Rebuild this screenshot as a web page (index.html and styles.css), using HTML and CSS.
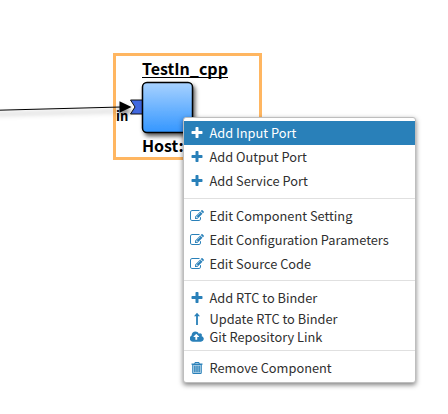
FILE: index.html
```
<!DOCTYPE html>
<html lang="en">
<head>
<meta charset="utf-8">
<title>System editor</title>
<link rel="stylesheet" href="styles.css">
</head>
<body>
<svg class="diagram" width="448" height="414" viewBox="0 0 448 414">
  <defs>
    <linearGradient id="body" x1="0" y1="0" x2="0" y2="1"><stop offset="0" stop-color="#a8d2ff"/><stop offset="1" stop-color="#3396ff"/></linearGradient>
    <filter id="shadow" filterUnits="userSpaceOnUse" x="-20" y="50" width="300" height="130"><feDropShadow dx="2" dy="3" stdDeviation="2.2" flood-color="#000" flood-opacity=".65"/></filter>
    <filter id="soft" filterUnits="userSpaceOnUse" x="-20" y="80" width="180" height="50"><feDropShadow dx="1" dy="4" stdDeviation="2.5" flood-color="#000" flood-opacity=".5"/></filter>
  </defs>
  <rect class="selection" x="114.5" y="54.5" width="146" height="104"/>
  <text class="title" x="142" y="75" textLength="86" lengthAdjust="spacingAndGlyphs">TestIn_cpp</text>
  <path class="underline" d="M142 77.5h86"/>
  <text class="host" x="142" y="152">Host:</text>
  <path class="port" d="M130.500 100h14v14h-14l4.500-7z"/>
  <rect class="component" x="142.500" y="82.500" width="50" height="50" rx="4.500" filter="url(#shadow)"/>
  <g filter="url(#soft)"><path class="wire" d="M-5 110.300L121 107"/><path d="M119.500 101.300l12 5.700-12 5.700z"/></g>
  <text class="port-name" x="116" y="121">in</text>
</svg>
<svg class="sprites" width="0" height="0">
  <symbol id="plus" viewBox="0 0 1792 1792"><path d="M1600 736v192q0 40-28 68t-68 28h-416v416q0 40-28 68t-68 28h-192q-40 0-68-28t-28-68v-416h-416q-40 0-68-28t-28-68v-192q0-40 28-68t68-28h416v-416q0-40 28-68t68-28h192q40 0 68 28t28 68v416h416q40 0 68 28t28 68z"/></symbol>
  <symbol id="edit" viewBox="0 0 1792 1792"><path d="M888 1184l116-116-152-152-116 116v56h96v96h56zm440-720q-16-16-33 1l-350 350q-17 17-1 33t33-1l350-350q17-17 1-33zm80 594v190q0 119-84.500 203.500t-203.500 84.500h-832q-119 0-203.500-84.500t-84.500-203.500v-832q0-119 84.500-203.500t203.500-84.500h832q63 0 117 25 15 7 18 23 3 17-9 29l-49 49q-14 14-32 8-23-6-45-6h-832q-66 0-113 47t-47 113v832q0 66 47 113t113 47h832q66 0 113-47t47-113v-126q0-13 9-22l64-64q15-15 35-7t20 29zm-96-738l288 288-672 672h-288v-288zm444 132l-92 92-288-288 92-92q28-28 68-28t68 28l152 152q28 28 28 68t-28 68z"/></symbol>
  <symbol id="up" viewBox="0 0 14 14"><path d="M7 .8L10 4.300H7.900V13H6.100V4.300H4z"/></symbol>
  <symbol id="cloud" viewBox="-32 0 1920 1792"><path d="M1216 864q0-14-9-23l-352-352q-9-9-23-9t-23 9l-351 351q-10 12-10 24 0 14 9 23t23 9h224v352q0 13 9.500 22.500t22.500 9.500h192q13 0 22.500-9.500t9.500-22.500v-352h224q13 0 22.500-9.500t9.500-22.500zm640 288q0 159-112.500 271.500t-271.500 112.500h-1088q-185 0-316.500-131.500t-131.500-316.500q0-130 70-240t188-165q-2-30-2-43 0-212 150-362t362-150q156 0 285.500 87t188.500 231q71-62 166-62 106 0 181 75t75 181q0 76-41 138 130 31 213.500 135.500t83.500 238.500z"/></symbol>
  <symbol id="trash" viewBox="0 0 14 14"><path fill-rule="evenodd" d="M5 1h4l.8 1.500h2.700v1.300h-.7v7.700q0 1.500-1.300 1.500H3.500q-1.300 0-1.300-1.500V3.800h-.7V2.500h2.700zM5.500 2l-.3.500h3.600L8.500 2zM3.300 4v8h7.400V4zM4.200 4.800h1.300v6.500H4.200zM6.350 4.800h1.300v6.500h-1.300zM8.500 4.800h1.300v6.500H8.500z"/><path opacity=".35" d="M3.300 4h7.400v8H3.300z"/></symbol>
</svg>
<ul class="menu">
  <li class="item active"><svg class="icon"><use href="#plus"/></svg><span>Add Input Port</span></li>
  <li class="item"><svg class="icon"><use href="#plus"/></svg><span>Add Output Port</span></li>
  <li class="item"><svg class="icon"><use href="#plus"/></svg><span>Add Service Port</span></li>
  <li class="separator"></li>
  <li class="item"><svg class="icon"><use href="#edit"/></svg><span>Edit Component Setting</span></li>
  <li class="item"><svg class="icon"><use href="#edit"/></svg><span>Edit Configuration Parameters</span></li>
  <li class="item"><svg class="icon"><use href="#edit"/></svg><span>Edit Source Code</span></li>
  <li class="separator tight"></li>
  <li class="item"><svg class="icon"><use href="#plus"/></svg><span>Add RTC to Binder</span></li>
  <li class="item compact"><svg class="icon"><use href="#up"/></svg><span>Update RTC to Binder</span></li>
  <li class="item compact"><svg class="icon"><use href="#cloud"/></svg><span>Git Repository Link</span></li>
  <li class="separator tight"></li>
  <li class="item"><svg class="icon"><use href="#trash"/></svg><span>Remove Component</span></li>
</ul>
</body>
</html>
```
FILE: styles.css
```
* { box-sizing: border-box; }
body {
  margin: 0;
  width: 448px;
  height: 414px;
  position: relative;
  overflow: hidden;
  background: #fff;
  font-family: "Noto Sans CJK JP", "Noto Sans", sans-serif;
}
.diagram { display: block; }
.sprites { position: absolute; }
.selection { fill: none; stroke: #ffb661; stroke-width: 3; }
.title, .host { font-size: 16px; font-weight: 700; }
.underline { stroke: #000; stroke-width: 1; }
.component { fill: url(#body); stroke: #000; stroke-width: 1.5; }
.port { fill: #4169e1; stroke: #111; }
.wire { fill: none; stroke: #000; stroke-width: 1; }
.port-name { font-size: 13px; font-weight: 700; }
.menu {
  position: absolute;
  left: 183px;
  top: 117px;
  width: 233px;
  margin: 0;
  padding: 3px 0 2px;
  list-style: none;
  background: #fff;
  border: 1px solid #bebebe;
  border-radius: 3px;
  box-shadow: 0 2px 5px rgba(0, 0, 0, .5);
}
.item {
  display: flex;
  align-items: center;
  height: 24px;
  padding-left: 6px;
  gap: 5.5px;
  font-size: 12.8px;
  line-height: 24px;
  color: #2f2f2f;
  white-space: nowrap;
}
.item.compact { height: 18px; line-height: 18px; }
.icon { width: 14px; height: 14px; fill: #2980b9; }
.active { background: #2980b9; color: #fff; }
.active .icon { fill: #fff; }
.separator { height: 1px; margin: 5px 0; background: #e0e0e0; }
.separator.tight { margin-top: 4px; }
```
